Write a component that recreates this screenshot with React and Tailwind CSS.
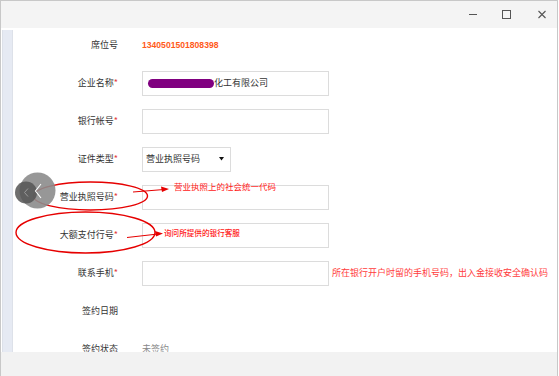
import React from "react";

const Row = ({ label, star, h = "h-[38px]", children, extra = "" }) => (
  <div className={`flex items-center shrink-0 ${h} ${extra}`}>
    <div className="w-[105px] text-right text-[9px] leading-[12px] text-[#333] whitespace-nowrap">
      {label}
      {star && <span className="text-[#e4393c]">*</span>}
    </div>
    <div className="ml-[24px] flex items-center">{children}</div>
  </div>
);

const Input = ({ children }) => (
  <div className="w-[187px] h-[25px] border border-[#dcdcdc] bg-white flex items-center pl-[5px] text-[9px] text-[#333]">
    {children}
  </div>
);

export default function App() {
  return (
    <div className="relative w-[559px] h-[376px] overflow-hidden bg-white font-['Noto_Sans_CJK_SC','Noto_Sans',sans-serif]">
      <div className="w-[558px] h-[376px] flex flex-col border-x border-t border-[#c8c8c8]">
        {/* title bar */}
        <div className="h-[27px] shrink-0 bg-[#f4f4f4] flex items-start justify-end pr-[11px] pt-[8px]">
          <svg width="8" height="10" viewBox="0 0 8 10">
            <line x1="0" y1="5.5" x2="8" y2="5.5" stroke="#555" strokeWidth="1" />
          </svg>
          <svg width="9" height="10" viewBox="0 0 9 10" className="ml-[25px]">
            <rect x="0.5" y="1.5" width="8" height="8" fill="none" stroke="#555" strokeWidth="1" />
          </svg>
          <svg width="8" height="10" viewBox="0 0 8 10" className="ml-[27px]">
            <path d="M0.5 2 L7.5 9 M7.5 2 L0.5 9" stroke="#555" strokeWidth="1.1" />
          </svg>
        </div>
        <div className="h-[2px] shrink-0 bg-white" />
        {/* body */}
        <div className="flex-1 flex min-h-0">
          <div className="ml-[1px] w-[11px] shrink-0 bg-[#e6eaf3] border-l border-[#cdd1d9] border-r border-[#dde1e9]" />
          <div className="flex-1 flex flex-col overflow-hidden">
            <Row label="席位号" h="h-[34px]" extra="pb-[4px]">
              <span className="font-['Liberation_Sans',sans-serif] font-bold text-[8.6px] text-[#ff5a1a]">1340501501808398</span>
            </Row>
            <Row label="企业名称" star>
              <Input>
                <span className="inline-block w-[66px] h-[9px] rounded-full bg-[#800080]" />
                <span className="leading-[12px]">化工有限公司</span>
              </Input>
            </Row>
            <Row label="银行帐号" star>
              <Input />
            </Row>
            <Row label="证件类型" star>
              <div className="w-[89px] h-[25px] border border-[#dcdcdc] flex items-center justify-between pl-[3px] pr-[6px] text-[9px] text-[#333]">
                <span>营业执照号码</span>
                <svg width="5" height="4" viewBox="0 0 5 4">
                  <polygon points="0,0 5,0 2.5,3.5" fill="#111" />
                </svg>
              </div>
            </Row>
            <Row label="营业执照号码" star>
              <Input />
            </Row>
            <Row label="大额支付行号" star>
              <Input />
            </Row>
            <Row label="联系手机" star>
              <Input />
              <span className="ml-[3px] text-[9px] text-[#ff3c3c] whitespace-nowrap">所在银行开户时留的手机号码，出入金接收安全确认码</span>
            </Row>
            <Row label="签约日期" />
            <Row label="签约状态">
              <span className="text-[9px] text-[#888]">未签约</span>
            </Row>
          </div>
        </div>
        <div className="h-[24px] shrink-0 bg-[#f2f2f2]" />
      </div>

      {/* annotations */}
      <span className="absolute left-[174px] top-[180px] text-[8.5px] leading-[12px] text-[#ff2020] whitespace-nowrap">营业执照上的社会统一代码</span>
      <span className="absolute left-[164px] top-[227px] text-[7.6px] leading-[11px] text-[#ff2020] font-medium whitespace-nowrap">询问所提供的银行客服</span>
      <svg className="absolute left-0 top-0 pointer-events-none" width="559" height="376" viewBox="0 0 559 376">
        <ellipse cx="90.5" cy="196" rx="57" ry="14" fill="none" stroke="#e60000" strokeWidth="1.4" />
        <ellipse cx="85.5" cy="232.5" rx="69.5" ry="20.5" fill="none" stroke="#e60000" strokeWidth="1.4" />
        <line x1="133" y1="192" x2="164" y2="189.5" stroke="#e60000" strokeWidth="1" />
        <polygon points="169,189 161,186.5 162,192" fill="#e60000" />
        <line x1="127" y1="237.5" x2="158" y2="234" stroke="#e60000" strokeWidth="1" />
        <polygon points="163,233.5 155,231 156,236.5" fill="#e60000" />
        <circle cx="37.5" cy="190.5" r="18" fill="#8c8c8c" fillOpacity="0.9" />
        <circle cx="26" cy="192.5" r="11" fill="#555" fillOpacity="0.85" />
        <path d="M28 188.5 L24.5 192.5 L28 196.5" fill="none" stroke="#9a9a9a" strokeWidth="1" />
        <path d="M41 184 L35.5 191 L41 198" fill="none" stroke="#fff" strokeWidth="1.1" />
      </svg>
    </div>
  );
}
